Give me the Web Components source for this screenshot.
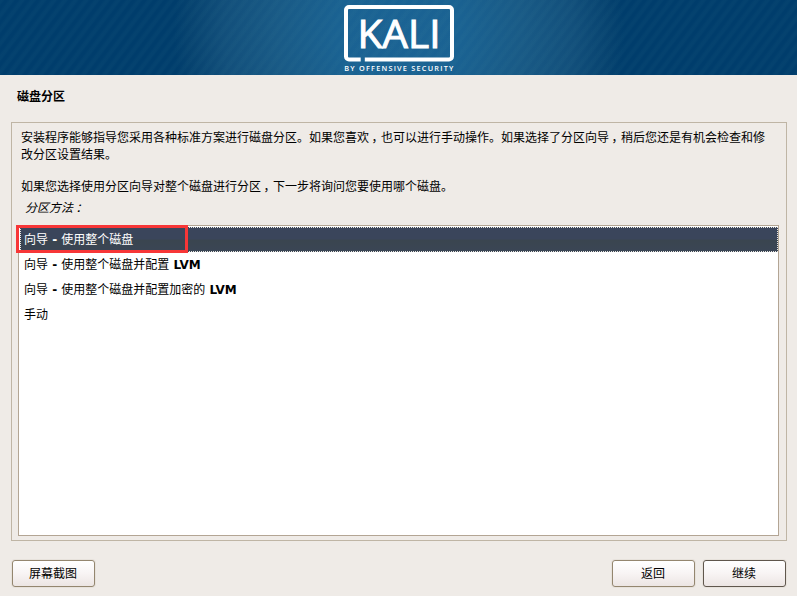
<!DOCTYPE html>
<html lang="zh-CN">
<head>
<meta charset="utf-8">
<title>Kali 安装程序</title>
<style>
html,body{margin:0;height:100%}
body{font:12px/17px "DejaVu Sans","Noto Sans CJK SC",sans-serif;color:#000;background:#efebe7;overflow:hidden}
</style>
</head>
<body>
<installer-window></installer-window>
<script>
const define = (name, html) => {
  const t = document.createElement('template');
  t.innerHTML = html;
  customElements.define(name, class extends HTMLElement {
    constructor() {
      super();
      this.attachShadow({mode: 'open'}).append(t.content.cloneNode(true));
    }
  });
};

define('kali-banner', `
<style>
:host{display:flex;justify-content:center;height:75px;background:
 repeating-linear-gradient(127deg,rgba(80,150,160,.055) 0 2px,transparent 4px 6px,rgba(80,150,160,.055) 8.500px),
 radial-gradient(circle 225px at 399px 34px,#1b6394 0,#1a6292 28%,#195a86 55%,#124f7b 78%,#06426f 94%,#003d6c 100%)}
svg{display:block}
text{font-family:"Open Sans","Noto Sans",sans-serif;fill:#fff}
</style>
<svg width="120" height="75" viewBox="339 0 120 75">
 <path d="M360.700 59.500H349a3 3 0 0 1-3-3V10a3 3 0 0 1 3-3H449a3 3 0 0 1 3 3V56.500a3 3 0 0 1-3 3H364.800" fill="none" stroke="#fff" stroke-width="4"/>
 <text x="357.500" y="47.500" font-size="38.500" textLength="83" lengthAdjust="spacingAndGlyphs" stroke="#fff" stroke-width="1">KALI</text>
 <text x="344.300" y="70.500" font-size="7.300" font-weight="600" textLength="109" lengthAdjust="spacing">BY OFFENSIVE SECURITY</text>
</svg>`);

define('mid-mark', `<style>:host{font-feature-settings:"halt";padding:0 3.500px 0 2.500px}</style><slot></slot>`);

define('page-title', `<style>:host{display:block;box-sizing:border-box;font-weight:700;padding:14px 17px 0;height:47px}</style><slot></slot>`);

define('question-panel', `
<style>
:host{display:flex;flex-direction:column;box-sizing:border-box;margin:0 10px 0 11px;height:419px;border:1px solid #bfb5a5;padding:7px 7px 4px 6px}
.text{padding:0 0 0 3px;height:84px}
</style><div class="text"><slot name="text"></slot></div><slot></slot>`);

define('choice-list', `
<style>:host{display:block;box-sizing:border-box;flex:1;margin-top:11px;background:#fff;border:1px solid #b3a594;padding:1px 0 0 1px}</style><slot></slot>`);

define('choice-item', `
<style>
:host{display:block;position:relative;box-sizing:border-box;height:25px;padding:5px 0 0 4px;white-space:nowrap}
:host([selected]){color:#fff;background:linear-gradient(#3a455b 0 48%,#3a454f 52%,#3a4555);outline:1px dotted #e8e6e0;outline-offset:-1px}
.mark{display:none}
:host([selected]) .mark{display:block;position:absolute;left:-4px;top:-2px;width:166px;height:22px;border:3px solid #f73637}
</style><slot></slot><span class="mark"></span>`);

define('gtk-button', `
<style>
:host{display:flex;box-sizing:border-box;width:83px;height:27px;align-items:center;justify-content:center;padding:2px 1px 0 0;border:1px solid #94866f;border-radius:3px;background:linear-gradient(#fff,#f8f4f4 50%,#ece5e3);box-shadow:0 0 0 1px #e7e2dc}
:host([default]){border-color:#60574d}
</style><slot></slot>`);

define('button-bar', `
<style>:host{display:flex;padding:19px 11px 0 12px;gap:8px}.s{flex:1}</style>
<slot name="start"></slot><span class="s"></span><slot></slot>`);

define('installer-window', `
<style>
:host{display:block;width:797px;height:596px}
p{margin:0 0 15px}
.label{display:block;font-style:italic;padding-left:4px;margin-top:-11px}
b{font-weight:700}
</style>
<kali-banner></kali-banner>
<page-title>磁盘分区</page-title>
<question-panel>
<div slot="text"><p>安装程序能够指导您采用各种标准方案进行磁盘分区。如果您喜欢<mid-mark>，</mid-mark>也可以进行手动操作。如果选择了分区向导<mid-mark>，</mid-mark>稍后您还是有机会检查和修<br>改分区设置结果。</p><p>如果您选择使用分区向导对整个磁盘进行分区<mid-mark>，</mid-mark>下一步将询问您要使用哪个磁盘。</p><span class="label">分区方法<mid-mark>：</mid-mark></span></div>
<choice-list>
<choice-item selected>向导<b> - </b>使用整个磁盘</choice-item>
<choice-item>向导<b> - </b>使用整个磁盘并配置<b> LVM</b></choice-item>
<choice-item>向导<b> - </b>使用整个磁盘并配置加密的<b> LVM</b></choice-item>
<choice-item>手动</choice-item>
</choice-list>
</question-panel>
<button-bar><gtk-button slot="start">屏幕截图</gtk-button><gtk-button>返回</gtk-button><gtk-button default>继续</gtk-button></button-bar>`);
</script>
</body>
</html>
